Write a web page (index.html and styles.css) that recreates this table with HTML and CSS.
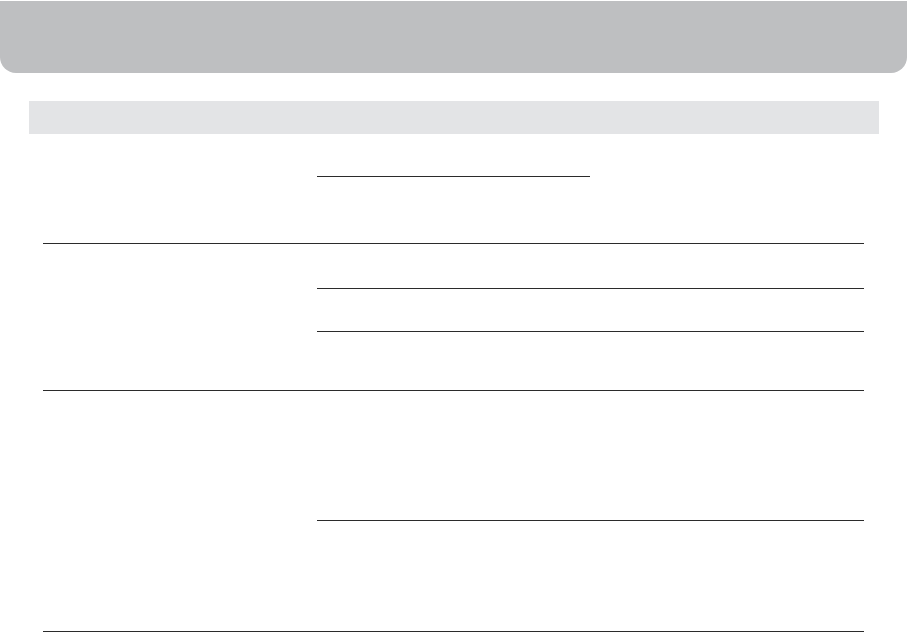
FILE: index.html
```html
<!DOCTYPE html>
<html lang="en">
<head>
<meta charset="utf-8">
<title>Form</title>
<link rel="stylesheet" href="styles.css">
</head>
<body>
<header class="topbar"></header>
<div class="section-bar"></div>
<main class="form">
  <section class="group group-1">
    <div class="label-col"></div>
    <div class="field-col">
      <div class="sub sub-gap"></div>
      <div class="sub sub-short"></div>
    </div>
  </section>
  <section class="group group-2">
    <div class="label-col"></div>
    <div class="field-col">
      <div class="sub sub-2a"></div>
      <div class="sub sub-2b"></div>
      <div class="sub sub-2c"></div>
    </div>
  </section>
  <section class="group group-3">
    <div class="label-col"></div>
    <div class="field-col">
      <div class="sub sub-3a"></div>
      <div class="sub sub-3b"></div>
    </div>
  </section>
</main>
</body>
</html>
```
FILE: styles.css
```css
* { box-sizing: border-box; }
html, body { margin: 0; padding: 0; background: #fff; font-family: "Liberation Sans", Arial, sans-serif; }
body { width: 908px; height: 632px; overflow: hidden; }

.topbar {
  margin: 1px 1px 0 0;
  height: 72px;
  background: #bebfc1;
  border-radius: 0 0 16px 16px;
}

.section-bar {
  margin: 28px 0 0 29px;
  width: 850px;
  height: 33px;
  background: #e3e4e6;
}

.form {
  margin-left: 43px;
  width: 821px;
}

.group {
  display: grid;
  grid-template-columns: 274px 1fr;
  border-bottom: 1px solid #2b2b2b;
}

.field-col { display: flex; flex-direction: column; }

.sub-gap { height: 42px; }
.sub-short { height: 67px; width: 273px; border-top: 1px solid #2b2b2b; }

.sub-2a { height: 45px; border-bottom: 1px solid #2b2b2b; }
.sub-2b { height: 43px; border-bottom: 1px solid #2b2b2b; }
.sub-2c { height: 58px; }

.sub-3a { height: 130px; border-bottom: 1px solid #2b2b2b; }
.sub-3b { height: 110px; }
```
